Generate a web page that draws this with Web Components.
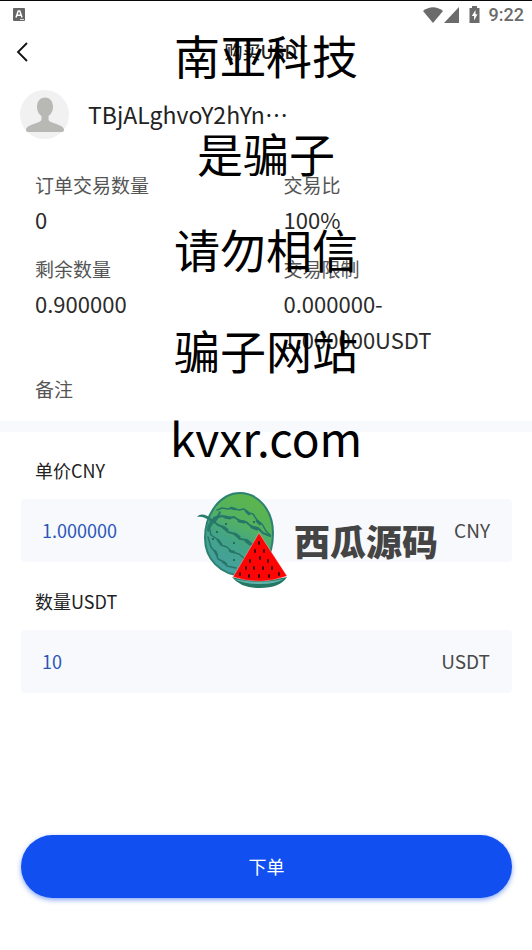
<!DOCTYPE html>
<html lang="zh-CN">
<head>
<meta charset="utf-8">
<meta name="viewport" content="width=device-width, initial-scale=1">
<title>购买USDT</title>
<style>
    body {
        margin: 0;
        background: #fff;
        color: #222;
        font-family: "Noto Sans CJK SC", sans-serif;
    }
</style>
</head>
<body>
<order-page></order-page>

<script>
class StatusBar extends HTMLElement {
    constructor() {
        super();

        let tmpl = document.createElement('template')
        tmpl.innerHTML = `
            <style>
                :host {
                    display: flex;
                    align-items: center;
                    justify-content: space-between;
                    box-sizing: border-box;
                    height: 28px;
                    padding: 0 8px 0 13px;
                    border-top: 1px solid #0a0508;
                    color: #6b6b6b;
                    font: 500 18px Roboto, sans-serif;
                }
                .right { display: flex; align-items: center; }
                .battery { margin: 0 9px; }
                svg { display: block; }
            </style>
            <svg width="12" height="13" viewBox="0 0 12 13">
                <rect width="12" height="13" rx="1" fill="#666"/>
                <path d="M3 9.500 5.200 3h1.600L9 9.500M4 7.300h4" fill="none" stroke="#fff" stroke-width="1.500"/>
                <path d="M7 11.500h4" stroke="#ddd"/>
            </svg>
            <div class="right">
                <svg width="20" height="16" viewBox="0 0 20 16">
                    <path d="M0 4Q10-3.500 20 4L10 16Z" fill="#6b6b6b"/>
                </svg>
                <svg width="17" height="16" viewBox="0 0 17 16">
                    <path d="M16 0V16H1Z" fill="#6b6b6b"/>
                </svg>
                <svg class="battery" width="11" height="17" viewBox="0 0 11 17">
                    <path d="M3 0h5v2h2.500v15H.5V2H3Z" fill="#6b6b6b"/>
                    <path d="M6.500 4 2.800 10h2.300v4.500L8.500 8.300H6.500Z" fill="#fff"/>
                </svg>
                <span>9:22</span>
            </div>
        `

        let shadowRoot = this.attachShadow({mode: 'open'})
        shadowRoot.appendChild(tmpl.content.cloneNode(true))
    }
}
window.customElements.define('status-bar', StatusBar)

class NavBar extends HTMLElement {
    constructor() {
        super();

        let tmpl = document.createElement('template')
        tmpl.innerHTML = `
            <style>
                :host {
                    display: grid;
                    grid-template-columns: 48px 1fr 48px;
                    align-items: center;
                    height: 48px;
                }
                button {
                    height: 48px;
                    padding: 0 0 0 16px;
                    border: 0;
                    background: none;
                }
                svg { display: block; }
                h1 {
                    margin: 0;
                    text-align: center;
                    font-size: 18px;
                    font-weight: 500;
                    line-height: 46px;
                    height: 48px;
                }
            </style>
            <button type="button" aria-label="返回">
                <svg width="13" height="20" viewBox="0 0 13 20">
                    <path d="M11 1 2 10l9 9" fill="none" stroke="#111" stroke-width="1.800"/>
                </svg>
            </button>
            <h1><slot></slot></h1>
        `

        let shadowRoot = this.attachShadow({mode: 'open'})
        shadowRoot.appendChild(tmpl.content.cloneNode(true))
    }
}
window.customElements.define('nav-bar', NavBar)

class SellerInfo extends HTMLElement {
    constructor() {
        super();

        let tmpl = document.createElement('template')
        tmpl.innerHTML = `
            <style>
                :host {
                    display: flex;
                    align-items: flex-start;
                    gap: 19px;
                    height: 49px;
                    padding: 14px 20px 0;
                    font-size: 23px;
                    line-height: 48px;
                }
                svg { flex: none; }
            </style>
            <svg width="49" height="49" viewBox="0 0 49 49">
                <circle cx="24.500" cy="24.500" r="24.500" fill="#f1f1f1"/>
                <path d="M25 7.500c5 0 8 4 8 9.500 0 4-2 7.500-4.500 9v3.500c0 2 4 3 8 4.500 5 2 7.500 3.500 7.500 6 0 1.500-1 2-3 2H9c-2 0-3-.500-3-2 0-2.500 2.500-4 7.500-6 4-1.500 8-2.500 8-4.500V26c-2.500-1.500-4.500-5-4.500-9 0-5.500 3-9.500 8-9.500Z" fill="#b8b9b4"/>
            </svg>
            <slot></slot>
        `

        let shadowRoot = this.attachShadow({mode: 'open'})
        shadowRoot.appendChild(tmpl.content.cloneNode(true))
    }
}
window.customElements.define('seller-info', SellerInfo)

class InfoItem extends HTMLElement {
    constructor() {
        super();

        let tmpl = document.createElement('template')
        tmpl.innerHTML = `
            <style>
                :host { display: block; }
                .label {
                    color: #555;
                    font-size: 19px;
                    line-height: 32px;
                }
                .value {
                    color: #2b2b2b;
                    font-size: 22px;
                    line-height: 36px;
                }
            </style>
            <div class="label"></div>
            <div class="value"><slot></slot></div>
        `

        let shadowRoot = this.attachShadow({mode: 'open'})
        shadowRoot.appendChild(tmpl.content.cloneNode(true))
        shadowRoot.querySelector('.label').textContent = this.getAttribute('label')
    }
}
window.customElements.define('info-item', InfoItem)

class AmountField extends HTMLElement {
    constructor() {
        super();

        let tmpl = document.createElement('template')
        tmpl.innerHTML = `
            <style>
                :host { display: block; }
                label {
                    display: block;
                    padding: 0 14px;
                    color: #222;
                    font-size: 18px;
                    line-height: 26px;
                }
                .box {
                    display: flex;
                    align-items: center;
                    height: 61px;
                    margin-top: 16px;
                    padding: 0 22px 2px 21px;
                    border-radius: 4px;
                    background: #f8f9fd;
                }
                input {
                    flex: 1;
                    min-width: 0;
                    padding: 0;
                    border: 0;
                    outline: 0;
                    background: none;
                    color: #2b56b8;
                    font: inherit;
                    font-size: 18px;
                }
                .unit {
                    color: #484848;
                    font-size: 19px;
                }
            </style>
            <label for="amount"></label>
            <div class="box">
                <input id="amount" type="text" inputmode="decimal">
                <span class="unit"><slot></slot></span>
            </div>
        `

        let shadowRoot = this.attachShadow({mode: 'open'})
        shadowRoot.appendChild(tmpl.content.cloneNode(true))
        shadowRoot.querySelector('label').textContent = this.getAttribute('label')
        shadowRoot.getElementById('amount').value = this.getAttribute('value')
    }
}
window.customElements.define('amount-field', AmountField)

class SubmitButton extends HTMLElement {
    constructor() {
        super();

        let tmpl = document.createElement('template')
        tmpl.innerHTML = `
            <style>
                :host { display: block; }
                button {
                    display: block;
                    width: 100%;
                    height: 63px;
                    padding: 0 0 2px;
                    border: 0;
                    border-radius: 32px;
                    background: #114ff0;
                    box-shadow: 0 2px 5px rgba(17, 79, 240, .5);
                    color: #fff;
                    font: inherit;
                    font-size: 18px;
                }
            </style>
            <button type="submit"><slot></slot></button>
        `

        let shadowRoot = this.attachShadow({mode: 'open'})
        shadowRoot.appendChild(tmpl.content.cloneNode(true))
    }
}
window.customElements.define('submit-button', SubmitButton)

class WarningMark extends HTMLElement {
    constructor() {
        super();

        let tmpl = document.createElement('template')
        tmpl.innerHTML = `
            <style>
                :host {
                    position: absolute;
                    left: 0;
                    right: 0;
                    text-align: center;
                    color: #000;
                    font-size: 46px;
                    line-height: 60px;
                    pointer-events: none;
                }
            </style>
            <slot></slot>
        `

        let shadowRoot = this.attachShadow({mode: 'open'})
        shadowRoot.appendChild(tmpl.content.cloneNode(true))
    }

    connectedCallback() {
        this.style.top = this.getAttribute('top') + 'px'
    }
}
window.customElements.define('warning-mark', WarningMark)

class MelonLogo extends HTMLElement {
    constructor() {
        super();

        let tmpl = document.createElement('template')
        tmpl.innerHTML = `
            <style>
                :host {
                    display: flex;
                    align-items: center;
                    gap: 6px;
                    color: #444;
                    font-size: 36px;
                    font-weight: 900;
                    line-height: 60px;
                    pointer-events: none;
                }
                svg { flex: none; }
            </style>
            <svg width="92" height="98" viewBox="0 0 92 98">
                <defs>
                    <linearGradient id="rind" x1=".7" y1="0" x2=".3" y2="1">
                        <stop offset="0" stop-color="#5db548"/>
                        <stop offset=".35" stop-color="#55b260"/>
                        <stop offset=".6" stop-color="#43a486"/>
                        <stop offset="1" stop-color="#469fa4"/>
                    </linearGradient>
                </defs>
                <path d="M44 2C62 2 77 19 77 42c0 24-12 44-29 43C23 84 9 67 9 47 9 23 24 2 44 2Z" fill="url(#rind)" stroke="#2c8272" stroke-width="2"/>
                <path d="M1 26c3-4 9-3 15 2 4-2 6-4 7-8l2 1c-1 5-4 9-7 11-3 3-4 6-5 9l-2-1c0-4 1-7 3-10-5-4-9-5-13-4Z" fill="#297c6b"/>
                <g fill="none" stroke="#26766a" stroke-linecap="round" stroke-linejoin="round">
                    <path d="M21 19l5-2 6 1 4-1 7 2 5-1 5 4 4 1 4 6 5 4 4 7 4 4" stroke-width="1.500"/>
                    <path d="M35 17l4 1M50 20l3 3M61 30l3 3" stroke-width="2.500"/>
                    <path d="M18 27l8-2 7 2 5-1 6 4 6 1 6 5 6 1 5 5 7 3" stroke-width="2"/>
                    <path d="M29 26l5 1M43 30l5 1M56 36l5 2" stroke-width="3"/>
                    <path d="M16 29l6 5 5 2 5 5 7 2 5 5 7 1 7 6" stroke-width="2"/>
                    <path d="M27 36l4 3M39 43l4 3M50 50l4 3" stroke-width="3"/>
                    <path d="M13 36l2 8 6 4 4 6 6 2 5 5 7 2 6 5" stroke-width="1.500"/>
                    <path d="M22 49l3 4M34 60l4 1" stroke-width="2.500"/>
                    <path d="M12 46l3 10 5 6 2 6 6 3 3 4 9 2" stroke-width="1.500"/>
                    <path d="M19 60l2 4M27 71l3 2" stroke-width="2.500"/>
                </g>
                <g fill="#195b4e">
                    <circle cx="30" cy="33" r="1"/><circle cx="58" cy="31" r="1"/>
                    <circle cx="21" cy="41" r="1"/><circle cx="17" cy="48" r="1"/>
                    <circle cx="38" cy="52" r="1"/><circle cx="38" cy="69" r="1"/>
                </g>
                <path d="M36 86q27 7 55 0-7 11-27 11T36 86Z" fill="#237865"/>
                <path d="M38 88q26 6 50 0-8 5-24 5T38 88Z" fill="#60b6ad"/>
                <path d="M63 42 91 85q-27 10-54 1Z" fill="#fe0505" stroke="#fff" stroke-opacity=".6" stroke-width=".5"/>
                <path d="M63 51v2M59 59v2M68 59v2M64 66v2M54 69v2M72 69v2M50 76v2M58 76v2M67 76v2M76 76v2M44 82v2M53 84v2M63 84v2M73 84v2M83 82v2" stroke="#430b0b" stroke-width="2" stroke-linecap="round"/>
            </svg>
            <slot></slot>
        `

        let shadowRoot = this.attachShadow({mode: 'open'})
        shadowRoot.appendChild(tmpl.content.cloneNode(true))
    }
}
window.customElements.define('melon-logo', MelonLogo)

class OrderPage extends HTMLElement {
    constructor() {
        super();

        let tmpl = document.createElement('template')
        tmpl.innerHTML = `
            <style>
                :host {
                    display: flex;
                    flex-direction: column;
                    position: relative;
                    box-sizing: border-box;
                    min-height: 100vh;
                    padding-bottom: 52px;
                }
                .info {
                    display: grid;
                    grid-template-columns: 1fr 1fr;
                    row-gap: 16px;
                    padding: 30px 0 15px 35px;
                    border-bottom: 11px solid #f8f9fd;
                }
                .info info-item { padding-right: 14px; }
                .info .remark { grid-column: 1 / 3; height: 33px; }
                form {
                    flex: 1;
                    display: flex;
                    flex-direction: column;
                    gap: 26px;
                    padding: 25px 20px 0 21px;
                }
                submit-button { margin-top: auto; }
                melon-logo {
                    position: absolute;
                    top: 491px;
                    left: 196px;
                }
            </style>
            <status-bar></status-bar>
            <nav-bar>购买USDT</nav-bar>
            <seller-info>TBjALghvoY2hYn⋯</seller-info>
            <section class="info">
                <info-item label="订单交易数量">0</info-item>
                <info-item label="交易比">100%</info-item>
                <info-item label="剩余数量">0.900000</info-item>
                <info-item label="交易限制">0.000000-1.000000USDT</info-item>
                <info-item class="remark" label="备注"></info-item>
            </section>
            <form>
                <amount-field label="单价CNY" value="1.000000">CNY</amount-field>
                <amount-field label="数量USDT" value="10">USDT</amount-field>
                <submit-button>下单</submit-button>
            </form>
            <warning-mark top="24">南亚科技</warning-mark>
            <warning-mark top="122">是骗子</warning-mark>
            <warning-mark top="218">请勿相信</warning-mark>
            <warning-mark top="319">骗子网站</warning-mark>
            <warning-mark top="407">kvxr.com</warning-mark>
            <melon-logo>西瓜源码</melon-logo>
        `

        let shadowRoot = this.attachShadow({mode: 'open'})
        shadowRoot.appendChild(tmpl.content.cloneNode(true))
    }
}
window.customElements.define('order-page', OrderPage)
</script>
</body>
</html>
